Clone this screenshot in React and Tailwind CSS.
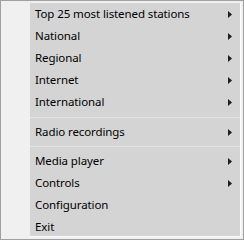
import React from 'react';

const groups = [
  [
    { label: 'Top 25 most listened stations', sub: true },
    { label: 'National', sub: true },
    { label: 'Regional', sub: true },
    { label: 'Internet', sub: true },
    { label: 'International', sub: true },
  ],
  [{ label: 'Radio recordings', sub: true }],
  [
    { label: 'Media player', sub: true },
    { label: 'Controls', sub: true },
    { label: 'Configuration' },
    { label: 'Exit' },
  ],
];

const Arrow = () => (
  <svg width="4" height="7" viewBox="0 0 4 7" className="shrink-0">
    <path d="M0 0 L4 3.5 L0 7 Z" fill="#1e1e1e" />
  </svg>
);

const MenuItem = ({ label, sub }) => (
  <div className="flex items-center h-[22px] shrink-0 pl-[5px] pr-[8px] text-black">
    <span className="flex-1 leading-none tracking-[-0.1px] pb-[1px]">{label}</span>
    {sub && <Arrow />}
  </div>
);

export default function App() {
  return (
    <div
      className="w-[244px] h-[240px] border border-[#a0a0a0] bg-[#f0f0f0] pt-[2px] pb-[2px] pr-[2px] pl-[29px] flex"
      style={{ fontFamily: '"Noto Sans", sans-serif', fontSize: '11.5px' }}
    >
      <div className="flex-1 flex flex-col overflow-hidden bg-[#d4d4d4] border-r border-b border-[#fbfbfb]">
        {groups.map((items, gi) => (
          <React.Fragment key={gi}>
            {gi === 1 && (
              <div className="h-[8px] shrink-0 pt-[4px]">
                <div className="h-px w-full bg-[#e3e3e3]" />
              </div>
            )}
            {gi === 2 && (
              <div className="h-[7px] shrink-0 pt-[3px]">
                <div className="h-px w-full bg-[#e3e3e3]" />
              </div>
            )}
            {items.map((it) => (
              <MenuItem key={it.label} {...it} />
            ))}
          </React.Fragment>
        ))}
      </div>
    </div>
  );
}
